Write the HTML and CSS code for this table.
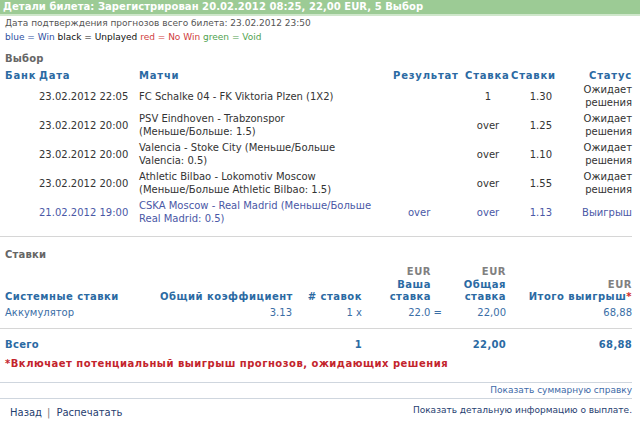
FILE: index.html
```html
<!DOCTYPE html>
<html lang="ru">
<head>
<meta charset="utf-8">
<title>Детали билета</title>
<link rel="stylesheet" href="styles.css">
</head>
<body>
<div class="title">Детали билета: Зарегистрирован 20.02.2012 08:25, 22,00 EUR, 5 Выбор</div>
<div class="page">
  <div class="confirm">Дата подтверждения прогнозов всего билета: 23.02.2012 23:50</div>
  <div class="legend"><span class="lg-blue">blue = Win</span> <span class="lg-black">black = Unplayed</span> <span class="lg-red">red = No Win</span> <span class="lg-green">green = Void</span></div>

  <div class="section-title sel-title">Выбор</div>
  <table class="picks">
    <colgroup>
      <col class="w-bank"><col class="w-date"><col class="w-match"><col class="w-res"><col class="w-pick"><col class="w-odds"><col class="w-status">
    </colgroup>
    <thead>
      <tr>
        <th class="c-bank">Банк</th>
        <th>Дата</th>
        <th>Матчи</th>
        <th>Результат</th>
        <th>Ставка</th>
        <th class="c-odds">Ставки</th>
        <th class="c-status">Статус</th>
      </tr>
    </thead>
    <tbody>
      <tr>
        <td></td>
        <td>23.02.2012 22:05</td>
        <td>FC Schalke 04 - FK Viktoria Plzen (1X2)</td>
        <td></td>
        <td class="c-pick">1</td>
        <td class="c-odds">1.30</td>
        <td class="c-status">Ожидает<br>решения</td>
      </tr>
      <tr>
        <td></td>
        <td>23.02.2012 20:00</td>
        <td>PSV Eindhoven - Trabzonspor<br>(Меньше/Больше: 1.5)</td>
        <td></td>
        <td class="c-pick">over</td>
        <td class="c-odds">1.25</td>
        <td class="c-status">Ожидает<br>решения</td>
      </tr>
      <tr>
        <td></td>
        <td>23.02.2012 20:00</td>
        <td>Valencia - Stoke City (Меньше/Больше<br>Valencia: 0.5)</td>
        <td></td>
        <td class="c-pick">over</td>
        <td class="c-odds">1.10</td>
        <td class="c-status">Ожидает<br>решения</td>
      </tr>
      <tr>
        <td></td>
        <td>23.02.2012 20:00</td>
        <td>Athletic Bilbao - Lokomotiv Moscow<br>(Меньше/Больше Athletic Bilbao: 1.5)</td>
        <td></td>
        <td class="c-pick">over</td>
        <td class="c-odds">1.55</td>
        <td class="c-status">Ожидает<br>решения</td>
      </tr>
      <tr class="win">
        <td></td>
        <td>21.02.2012 19:00</td>
        <td>CSKA Moscow - Real Madrid (Меньше/Больше<br>Real Madrid: 0.5)</td>
        <td class="c-res">over</td>
        <td class="c-pick">over</td>
        <td class="c-odds">1.13</td>
        <td class="c-status">Выигрыш</td>
      </tr>
    </tbody>
  </table>

  <div class="stakes-block">
    <div class="section-title">Ставки</div>
    <table class="stakes">
      <colgroup>
        <col class="s1"><col class="s2"><col class="s3"><col class="s4"><col class="s5"><col class="s6">
      </colgroup>
      <thead>
        <tr>
          <th class="first">Системные ставки</th>
          <th class="num">Общий коэффициент</th>
          <th class="num">#&nbsp;ставок</th>
          <th class="num pr11"><span class="eur">EUR</span><br>Ваша<br>ставка</th>
          <th class="num"><span class="eur">EUR</span><br>Общая<br>ставка</th>
          <th class="num"><span class="eur">EUR</span><br>Итого выигрыш<span class="star">*</span></th>
        </tr>
      </thead>
      <tbody>
        <tr class="vals">
          <td class="first">Аккумулятор</td>
          <td class="num">3.13</td>
          <td class="num">1 x</td>
          <td class="num">22.0 =</td>
          <td class="num">22,00</td>
          <td class="num">68,88</td>
        </tr>
        <tr class="total">
          <td class="first">Всего</td>
          <td></td>
          <td class="num">1</td>
          <td></td>
          <td class="num">22,00</td>
          <td class="num">68,88</td>
        </tr>
      </tbody>
    </table>
    <div class="note">*Включает потенциальный выигрыш прогнозов, ожидающих решения</div>
  </div>

  <div class="summary"><a href="#" class="summary-link">Показать суммарную справку</a></div>
  <div class="footer">
    <div class="nav"><a href="#">Назад</a><span class="sep">|</span><a href="#">Распечатать</a></div>
    <a href="#" class="detail">Показать детальную информацию о выплате.</a>
  </div>
</div>
</body>
</html>
```

FILE: styles.css
```css
html, body {
  margin: 0;
  padding: 0;
  background: #ffffff;
}
body {
  font-family: "DejaVu Sans", Verdana, sans-serif;
  font-size: 10px;
  color: #333333;
}
a {
  text-decoration: none;
}
.title {
  height: 14px;
  line-height: 14px;
  background: #9ccb95;
  border-bottom: 2px solid #cfe7cb;
  color: #ffffff;
  font-weight: bold;
  font-size: 10px;
  letter-spacing: 0.05px;
  padding-left: 3px;
  white-space: nowrap;
}
.page {
  width: 632px;
}
.confirm {
  font-size: 9px;
  line-height: 14px;
  color: #555555;
  padding-left: 5px;
}
.legend {
  font-size: 9px;
  line-height: 14px;
  padding-left: 5px;
}
.lg-blue { color: #2f4f9f; }
.lg-black { color: #111111; }
.lg-red { color: #d04040; }
.lg-green { color: #4fa24f; }

.section-title {
  font-weight: bold;
  color: #666666;
  line-height: 14px;
  padding-left: 5px;
  letter-spacing: 0.2px;
}
.sel-title {
  margin-top: 8px;
}

table {
  border-collapse: collapse;
  border-spacing: 0;
  table-layout: fixed;
  width: 632px;
  font-size: 10px;
}
th, td {
  padding: 0;
  text-align: left;
  font-weight: normal;
  white-space: nowrap;
}

.picks {
  margin-top: 4px;
}
.w-bank { width: 39px; }
.w-date { width: 100px; }
.w-match { width: 254px; }
.w-res { width: 72px; }
.w-pick { width: 46px; }
.w-odds { width: 44px; }
.w-status { width: 77px; }

.picks th {
  color: #2b6aa3;
  font-weight: bold;
  line-height: 12px;
  letter-spacing: 0.8px;
  vertical-align: bottom;
}
.picks th.c-bank {
  padding-left: 5px;
}
.picks td {
  line-height: 13px;
  padding: 1px 0 2px 0;
  vertical-align: middle;
}
.picks .c-pick {
  text-align: center;
}
.picks .c-odds {
  text-align: right;
  padding-right: 3px;
}
.picks th.c-odds {
  padding-right: 2px;
}
.picks .c-status {
  text-align: right;
}
.picks th.c-status {
  margin-right: -1px;
}
.picks .c-res {
  padding-left: 15px;
}
.picks tr.win td {
  color: #4a58a6;
}

.stakes-block {
  margin-top: 9px;
  border-top: 1px solid #d6d6d6;
  padding-top: 11px;
}
.stakes {
  margin-top: 4px;
}
.s1 { width: 160px; }
.s2 { width: 132px; }
.s3 { width: 70px; }
.s4 { width: 80px; }
.s5 { width: 64px; }
.s6 { width: 126px; }

.stakes th {
  color: #2b6aa3;
  font-weight: bold;
  line-height: 12.5px;
  letter-spacing: 0.5px;
  vertical-align: bottom;
}
.stakes .first {
  padding-left: 5px;
}
.stakes .num {
  text-align: right;
}
.stakes th.pr11 {
  padding-right: 11px;
}
.stakes .eur {
  color: #808080;
}
.stakes .star {
  color: #d02a2a;
}
.stakes tr.vals td {
  color: #3a6ea6;
  line-height: 13px;
  padding-top: 2px;
  padding-bottom: 9px;
}
.stakes tr.total td {
  color: #2b6aa3;
  font-weight: bold;
  line-height: 14px;
  letter-spacing: 0.3px;
  padding-top: 9px;
  border-top: 1px solid #d6d6d6;
}
.note {
  color: #c3242c;
  font-weight: bold;
  line-height: 14px;
  letter-spacing: 0.5px;
  padding-left: 5px;
  margin-top: 5px;
}

.summary {
  margin-top: 11px;
  border-top: 1px solid #cfd6de;
  border-bottom: 1px solid #cfd6de;
  line-height: 15px;
  text-align: right;
  font-size: 9px;
}
.summary-link {
  color: #3d6aa8;
}
.footer {
  display: flex;
  justify-content: space-between;
  align-items: flex-start;
}
.nav {
  margin-top: 7px;
  line-height: 14px;
  padding-left: 10px;
}
.nav a {
  color: #1f4070;
}
.sep {
  color: #777777;
  margin: 0 6px 0 5px;
}
.detail {
  margin-top: 5px;
  line-height: 12px;
  font-size: 9px;
  color: #1f4070;
}
```
